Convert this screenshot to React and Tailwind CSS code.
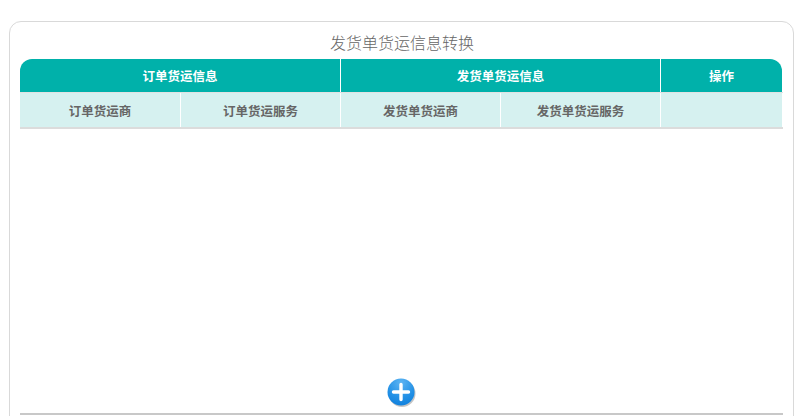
import React from "react";

const cjk = "font-['Liberation_Sans','Noto_Sans_CJK_SC',sans-serif]";

const PlusIcon = () => (
  <svg width="30" height="30" viewBox="0 0 30 30">
    <defs>
      <radialGradient id="plusFill" cx="0.5" cy="0.15" r="0.9">
        <stop offset="0" stopColor="#5db4f2" />
        <stop offset="0.6" stopColor="#2391e6" />
        <stop offset="1" stopColor="#0f7fdc" />
      </radialGradient>
    </defs>
    <circle cx="15" cy="15.5" r="13.5" fill="#8a8a8a" opacity="0.5" />
    <circle cx="14" cy="14" r="13.5" fill="url(#plusFill)" />
    <path d="M14 6.5v15M6.5 14h15" stroke="#fff" strokeWidth="3.4" strokeLinecap="round" />
  </svg>
);

export default function App() {
  return (
    <div className={`h-[416px] overflow-hidden bg-white pl-[9px] pr-px pt-[21px] ${cjk}`}>
      <div className="h-[420px] rounded-t-xl border border-[#d9d9d9] px-[10px] pt-[10px]">
        <h1 className="h-[27px] pl-px text-center text-base leading-[24px] font-light text-[#666]">发货单货运信息转换</h1>
        <div className="mr-px flex h-[33px] rounded-t-xl bg-[#00b1aa] text-[12.5px] font-bold text-white">
          <div className="flex w-[321px] items-center justify-center border-r border-white pt-[3px]">订单货运信息</div>
          <div className="flex w-[320px] items-center justify-center border-r border-white pt-[3px]">发货单货运信息</div>
          <div className="flex flex-1 items-center justify-center pt-[3px]">操作</div>
        </div>
        <div className="border-t border-b-2 border-t-[#e2e2e2] border-b-[#dcdcdc]">
          <div className="mr-px flex h-[34px] bg-[#d6f1f0] text-[12.5px] font-bold text-[#666]">
            <div className="flex w-[161px] items-center justify-center border-r border-white pt-[4px]">订单货运商</div>
            <div className="flex w-[160px] items-center justify-center border-r border-white pt-[4px]">订单货运服务</div>
            <div className="flex w-[160px] items-center justify-center border-r border-white pt-[4px]">发货单货运商</div>
            <div className="flex w-[160px] items-center justify-center border-r border-white pt-[4px]">发货单货运服务</div>
            <div className="flex-1" />
          </div>
        </div>
        <div className="flex h-[286px] flex-col items-center justify-end border-b-2 border-[#c8c8c8]">
          <div className="mb-[5px] flex w-full justify-center">
            <PlusIcon />
          </div>
        </div>
      </div>
    </div>
  );
}
